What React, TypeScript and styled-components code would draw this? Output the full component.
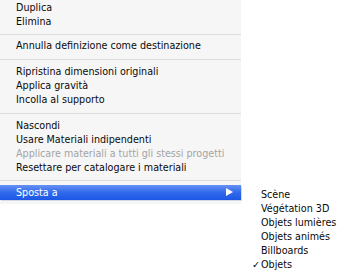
import React from 'react';
import styled, { createGlobalStyle } from 'styled-components';

const GlobalStyle = createGlobalStyle`
  html, body {
    margin: 0;
    padding: 0;
    background: #ffffff;
  }
  body {
    font-family: 'DejaVu Sans', 'Liberation Sans', sans-serif;
    font-size: 9.6px;
    color: #000;
  }
`;

type Entry =
  | { kind: 'item'; label: string; disabled?: boolean }
  | { kind: 'separator'; size: number }
  | { kind: 'submenu'; label: string; children: { label: string; checked?: boolean }[] };

const entries: Entry[] = [
  { kind: 'item', label: 'Duplica' },
  { kind: 'item', label: 'Elimina' },
  { kind: 'separator', size: 10 },
  { kind: 'item', label: 'Annulla definizione come destinazione' },
  { kind: 'separator', size: 12 },
  { kind: 'item', label: 'Ripristina dimensioni originali' },
  { kind: 'item', label: 'Applica gravità' },
  { kind: 'item', label: 'Incolla al supporto' },
  { kind: 'separator', size: 12 },
  { kind: 'item', label: 'Nascondi' },
  { kind: 'item', label: 'Usare Materiali indipendenti' },
  { kind: 'item', label: 'Applicare materiali a tutti gli stessi progetti', disabled: true },
  { kind: 'item', label: 'Resettare per catalogare i materiali' },
  { kind: 'separator', size: 10 },
  {
    kind: 'submenu',
    label: 'Sposta a',
    children: [
      { label: 'Scène' },
      { label: 'Végétation 3D' },
      { label: 'Objets lumières' },
      { label: 'Objets animés' },
      { label: 'Billboards' },
      { label: 'Objets', checked: true },
    ],
  },
];

const Page = styled.div`
  width: 342px;
  height: 275px;
  overflow: hidden;
`;

const Menu = styled.div`
  width: 241px;
  background: #f6f6f6;
  padding: 1px 0 4px;
`;

const Row = styled.div<{ $disabled?: boolean }>`
  height: 14px;
  line-height: 14px;
  padding-left: 16px;
  white-space: nowrap;
  color: ${(p) => (p.$disabled ? '#a4a4a4' : '#0a0a0a')};
`;

const Separator = styled.div<{ $size: number }>`
  height: ${(p) => p.$size}px;
  display: flex;
  align-items: center;
  &::after {
    content: '';
    flex: 1;
    height: 1px;
    background: #dcdcdc;
  }
`;

const HighlightRow = styled.div`
  position: relative;
  height: 15px;
  line-height: 15px;
  padding-left: 16px;
  color: #ffffff;
  background: linear-gradient(#6792f4, #3069ec 50%, #1a57e4);
  box-shadow: 1px 1px 0 #d4dae6;
`;

const Arrow = styled.span`
  position: absolute;
  right: 8px;
  top: 3px;
  width: 0;
  height: 0;
  border-top: 4.5px solid transparent;
  border-bottom: 4.5px solid transparent;
  border-left: 7px solid #ffffff;
`;

const SubMenu = styled.div`
  position: absolute;
  left: 244px;
  top: 3px;
  width: 100px;
  background: #ffffff;
`;

const SubRow = styled.div`
  position: relative;
  height: 14px;
  line-height: 14px;
  padding-left: 17px;
  color: #0a0a0a;
  white-space: nowrap;
`;

const Check = styled.span`
  position: absolute;
  left: 8px;
`;

export default function App() {
  return (
    <Page>
      <GlobalStyle />
      <Menu>
        {entries.map((e, i) => {
          if (e.kind === 'separator') return <Separator key={i} $size={e.size} />;
          if (e.kind === 'submenu')
            return (
              <HighlightRow key={i}>
                {e.label}
                <Arrow />
                <SubMenu>
                  {e.children.map((c) => (
                    <SubRow key={c.label}>
                      {c.checked && <Check>✓</Check>}
                      {c.label}
                    </SubRow>
                  ))}
                </SubMenu>
              </HighlightRow>
            );
          return (
            <Row key={i} $disabled={e.disabled}>
              {e.label}
            </Row>
          );
        })}
      </Menu>
    </Page>
  );
}
